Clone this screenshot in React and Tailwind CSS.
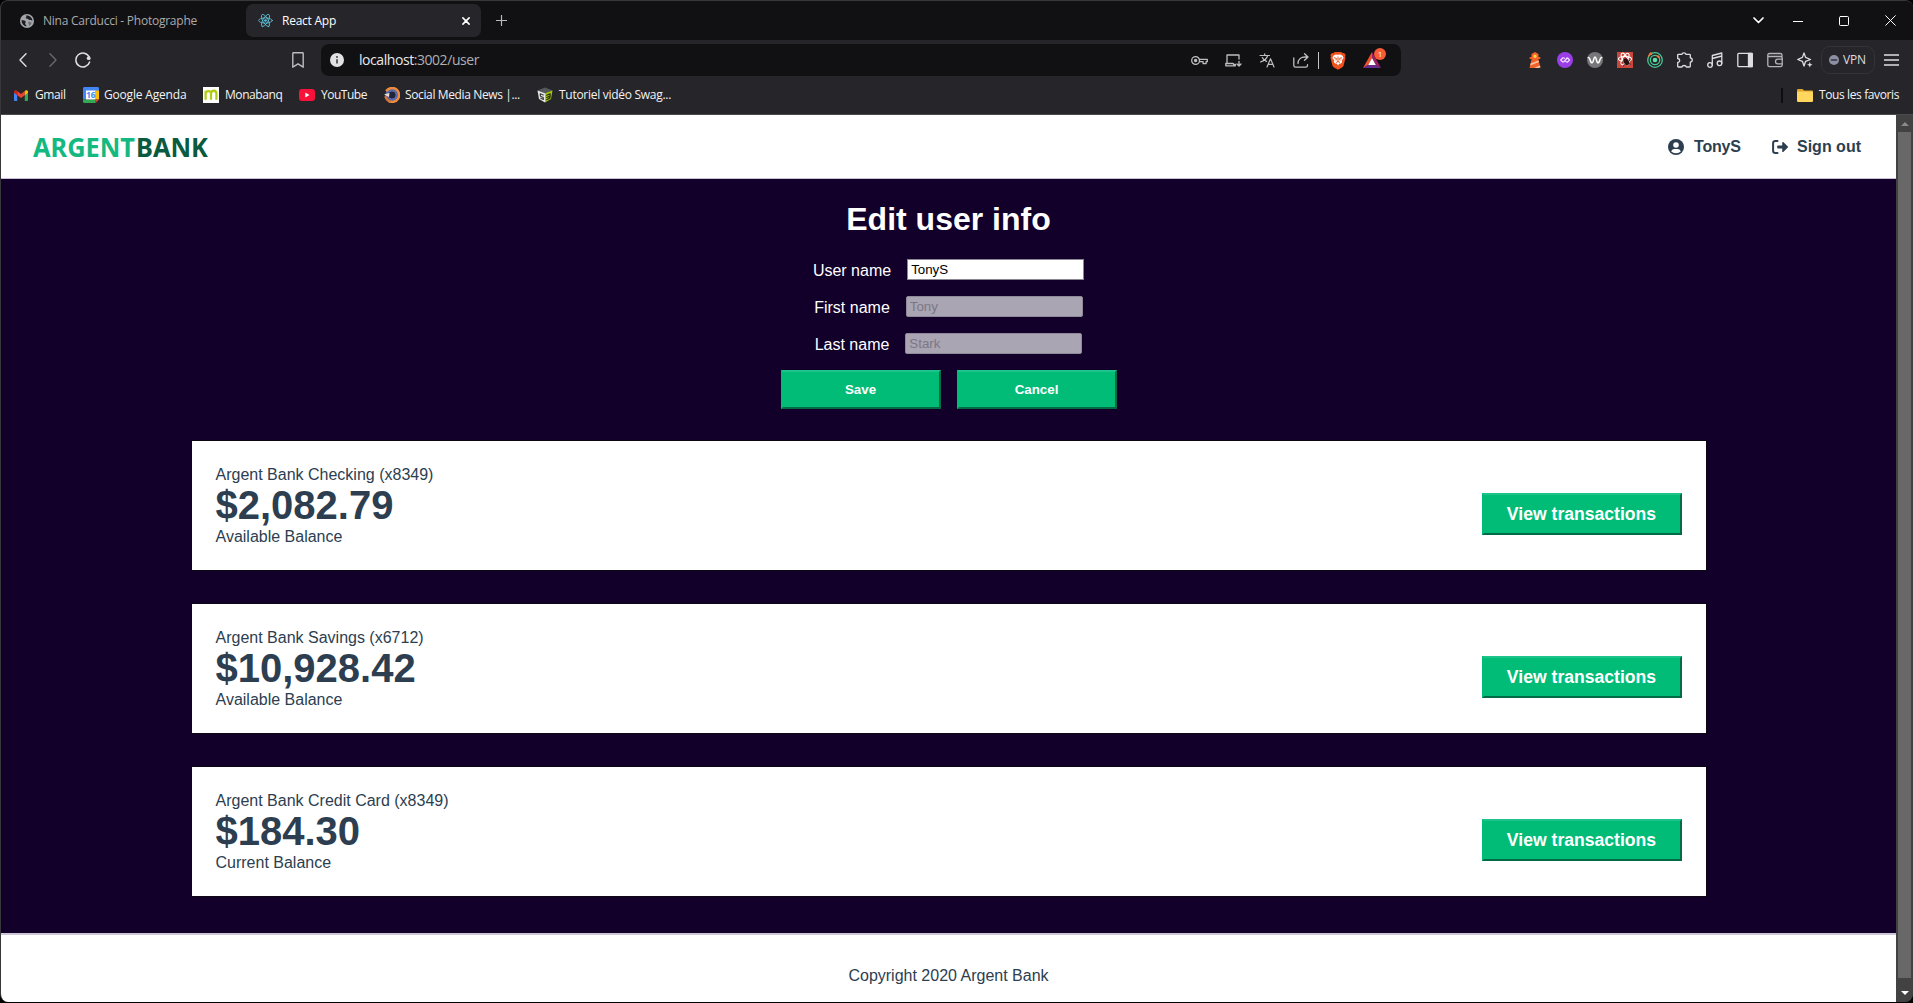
import React from "react";

const UI = "font-['Open_Sans','Noto_Sans',sans-serif]";

function Svg({ size = 16, w, h, box = "0 0 16 16", className = "", children }) {
  return (
    <svg
      width={w || size}
      height={h || size}
      viewBox={box}
      fill="none"
      stroke="currentColor"
      strokeWidth="1.3"
      strokeLinecap="round"
      strokeLinejoin="round"
      className={`block shrink-0 ${className}`}
    >
      {children}
    </svg>
  );
}

/* ---------- tab strip ---------- */

const GlobeIcon = () => (
  <Svg size={14} box="0 0 14 14">
    <circle cx="7" cy="7" r="7" fill="#a3a6aa" stroke="none" />
    <path d="M1.6 6.2c1.8.2 3.4.1 4 1.2.5 1-.7 1.4-.4 2.6.2.8 1.2.7 1.3 2.4A5.5 5.5 0 0 1 1.6 6.2z" fill="#1d1d20" stroke="none" />
    <path d="M5.4 1.7c1.2.3 1.2 1 .6 1.7-.7.7-.2 1.3.8 1.2 1.2-.1 1.3 1 2.3 1.2 1.2.2 1.7.7 3.4.6A5.6 5.6 0 0 0 5.4 1.7z" fill="#1d1d20" stroke="none" />
    <path d="M8.3 7.9c1.2-.3 2.4.2 3.4.9-.5 1.500-1.500 2.600-2.700 3.200.3-1.500-1.200-2.800-.7-4.100z" fill="#6d7074" stroke="none" />
  </Svg>
);

const ReactIcon = () => (
  <Svg size={15} box="0 0 16 16" className="text-[#5cc3dc]">
    <g strokeWidth="0.9">
      <ellipse cx="8" cy="8" rx="7.3" ry="2.8" />
      <ellipse cx="8" cy="8" rx="7.3" ry="2.8" transform="rotate(60 8 8)" />
      <ellipse cx="8" cy="8" rx="7.3" ry="2.8" transform="rotate(120 8 8)" />
    </g>
    <circle cx="8" cy="8" r="1.4" fill="currentColor" stroke="none" />
  </Svg>
);

function TabStrip() {
  return (
    <div className="flex h-[39px] shrink-0 items-center bg-[#111113]">
      <div className="flex w-[245px] items-center pl-[19px]">
        <GlobeIcon />
        <span className="ml-[9px] text-[12px] tracking-[-0.24px] text-[#a9aaad]">Nina Carducci - Photographe</span>
      </div>
      <div className="flex h-[33px] w-[235px] items-center rounded-[7px] bg-[#262529] pl-[12px] pr-[11px]">
        <ReactIcon />
        <span className="ml-[9px] flex-1 text-[12px] tracking-[-0.24px] text-white">React App</span>
        <Svg size={8} box="0 0 9 9" className="text-white">
          <path d="M1 1l7 7M8 1L1 8" strokeWidth="1.8" />
        </Svg>
      </div>
      <Svg size={11} box="0 0 11 11" className="ml-[15px] text-[#b9babc]">
        <path d="M5.5.5v10M.5 5.5h10" strokeWidth="1.2" />
      </Svg>
      <div className="ml-auto flex items-center text-white">
        <div className="flex w-[40px] justify-center">
          <Svg w={11} h={7} box="0 0 11 7"><path d="M1 1l4.5 4.5L10 1" strokeWidth="1.7" /></Svg>
        </div>
        <div className="flex w-[40px] justify-center">
          <Svg w={10} h={10} box="0 0 10 10"><path d="M0 5.5h10" strokeWidth="1" strokeLinecap="butt" /></Svg>
        </div>
        <div className="flex w-[52px] justify-center">
          <Svg w={10} h={10} box="0 0 10 10"><rect x=".5" y=".5" width="9" height="9" rx="1" strokeWidth="1" /></Svg>
        </div>
        <div className="flex w-[40px] justify-center">
          <Svg w={11} h={11} box="0 0 11 11"><path d="M.7.7l9.6 9.6M10.3.7L.7 10.3" strokeWidth="1" /></Svg>
        </div>
        <div className="w-[3px]" />
      </div>
    </div>
  );
}

/* ---------- toolbar ---------- */

const BraveLion = () => (
  <Svg w={16} h={19} box="0 0 16 19">
    <path d="M4.6 1h6.8l1.2 1.3 1.5-.2L15.600 4l-.5 1.500.4 1.600-1.900 7.300c-.3 1-1 1.700-2 2.400L8 18.700l-3.600-1.900c-1-.7-1.700-1.400-2-2.400L.5 7.100l.4-1.600L.4 4l1.500-1.900 1.500.2z" fill="#f0521e" stroke="none" />
    <path d="M8 3.700l2.400-.3 2.200 1.300 1 2.200-1.900 2.600.5 1.500-1.600 1.800-1.200-.2L8 14.500l-1.400-1.900-1.200.2L3.800 11l.5-1.500L2.400 6.900l1-2.200 2.200-1.300z" fill="#fff" stroke="none" />
    <path d="M4.300 6.800l2.200.7-.5 1.600M11.700 6.800l-2.200.7.5 1.600M8 6v4.500M6.500 11.300L8 10.500l1.500.8" stroke="#f0521e" strokeWidth="1" />
  </Svg>
);

function BatIcon() {
  return (
    <div className="relative">
      <Svg w={18} h={16} box="0 0 18 16">
        <path d="M9 0L0 16l5.400-3.200L9 6z" fill="#f0502c" stroke="none" />
        <path d="M0 16h18l-5.400-3.200H5.400z" fill="#662d91" stroke="none" />
        <path d="M9 0v6l3.600 6.800L18 16z" fill="#9e1f63" stroke="none" />
        <path d="M9 6l-3.800 6.900h7.600z" fill="#fff" stroke="none" />
      </Svg>
      <span className="absolute -top-[4px] left-[11px] flex h-3 w-3 items-center justify-center rounded-full bg-[#fa5a36] text-[8px] leading-none text-white">1</span>
    </div>
  );
}

function AddressBar() {
  const cell = "flex w-[34px] justify-center";
  return (
    <div className="flex h-[32px] w-[1080px] items-center rounded-[8px] bg-[#111113] pl-[9px] text-[#bdbec2]">
      <Svg size={14} box="0 0 14 14">
        <circle cx="7" cy="7" r="7" fill="#e2e2e5" stroke="none" />
        <path d="M7 6.300v4.200" stroke="#333337" strokeWidth="1.5" strokeLinecap="butt" />
        <circle cx="7" cy="4" r=".9" fill="#333337" stroke="none" />
      </Svg>
      <span className="ml-[15px] flex-1 pb-px text-[14px] tracking-[-0.44px] text-[#aeb0b4]">
        <span className="text-[#e8e8ea]">localhost</span>:3002/user
      </span>
      <div className={cell}>
        <Svg w={17} h={11} box="0 0 17 11">
          <circle cx="4.600" cy="5.500" r="3.900" />
          <circle cx="4.600" cy="5.500" r="1.100" fill="currentColor" />
          <path d="M8.400 4.300h7.900v2.400h-1.200v2h-3v-2H8.500" />
        </Svg>
      </div>
      <div className={cell}>
        <Svg w={17} h={13} box="0 0 17 13">
          <path d="M14 5V1H2v8.500M10.500 11.800H.8V9.500h7.200l.8 1h1.700M14 7.300v4.400M12 10l2 2 2-2" />
        </Svg>
      </div>
      <div className={cell}>
        <Svg w={16} h={15} box="0 0 16 15">
          <path d="M1 2.500h9.500M5.700.8v1.700M8.700 2.500C7.800 5.500 4.800 8 1.500 9M3.300 4.500c.8 1.800 2.300 3 4.200 3.900M8 14l3.500-8.300L15 14M9.200 11.300h4.600" strokeWidth="1.2" />
        </Svg>
      </div>
      <div className={cell}>
        <Svg w={16} h={15} box="0 0 16 15">
          <path d="M.8 5v7.500c0 1 .7 1.700 1.700 1.700h10.300c1 0 1.700-.7 1.700-1.700v-.8M11.500.8L15 4l-3.500 3.200M14.800 4H12C8 4 5 6.500 5 10.500" />
        </Svg>
      </div>
      <div className="h-[17px] w-px bg-[#c4c4c8]" />
      <div className="flex w-[37px] justify-center"><BraveLion /></div>
      <div className="flex w-[32px] justify-center"><BatIcon /></div>
      <div className="w-[13px]" />
    </div>
  );
}

const extensions = [
  <Svg key="lighthouse" box="0 0 16 16">
    <g stroke="none">
      <path d="M8 0l3.500 2v3h1.800v2H2.700V5h1.800V2z" fill="#f4622b" />
      <path d="M4.600 7h6.800L13.500 16h-11z" fill="#f4622b" />
      <path d="M3.600 11.500L11.600 8.400l.3 1.500-8.600 3.500zM7 16l6-2.600.4 1.600-2 1z" fill="#fcc6a8" />
      <rect x="6.400" y="2.800" width="3.200" height="3.200" rx="1.400" fill="#ffd93b" />
    </g>
  </Svg>,
  <Svg key="purple">
    <circle cx="8" cy="8" r="8" fill="#9a3fe8" stroke="none" />
    <path d="M7.600 6.300L6 5.800 3.700 8l2 2h.8l3.800-4M9.500 6h1.200l1.800 2-2 2.100-1.800-.6" stroke="#f3dcff" strokeWidth="1.200" />
  </Svg>,
  <Svg key="wave">
    <circle cx="8" cy="8" r="8" fill="#77777a" stroke="none" />
    <path d="M1.300 5.500c1 0 1.300.6 1.700 2 .5 2 1 3.300 2 3.300C6.800 10.800 6.500 5 8 5s1.300 5.800 3 5.800c1 0 1.500-1.300 2-3.300.4-1.400.7-2 1.700-2" stroke="#fff" strokeWidth="1.500" />
  </Svg>,
  <Svg key="react-dev">
    <rect width="16" height="16" fill="#c9473c" stroke="none" />
    <g stroke="#fff" strokeWidth="1.100">
      <ellipse cx="8" cy="7" rx="6.500" ry="2.500" />
      <ellipse cx="8" cy="7" rx="6.500" ry="2.500" transform="rotate(60 8 7)" />
      <ellipse cx="8" cy="7" rx="6.500" ry="2.500" transform="rotate(120 8 7)" />
    </g>
    <ellipse cx="9.300" cy="9.800" rx="2.600" ry="3.600" transform="rotate(-30 9.300 9.800)" fill="#2b1010" stroke="none" />
    <path d="M6 9.500l-1 .8M7.200 12.500L6.500 14M12.300 8.500l1-.5M12.500 11.500l1 .8" stroke="#2b1010" strokeWidth=".8" />
  </Svg>,
  <Svg key="radar" className="text-[#48c796]">
    <circle cx="8" cy="8" r="7.300" />
    <circle cx="8" cy="8" r="4.700" />
    <circle cx="8" cy="8" r="2.300" fill="#5ae2a9" stroke="none" />
    <path d="M3 2.300A7 7 0 0 0 1.500 4M10 3.800a5 5 0 0 1 2 1.500" stroke="#e8703a" />
    <circle cx="3.800" cy="1.800" r="1.500" fill="#f0763a" stroke="none" />
    <circle cx="11.500" cy="4.700" r="1.200" fill="#f0763a" stroke="none" />
  </Svg>,
  <Svg key="puzzle">
    <path d="M1.500 2.300h3.300c.3-2 3.900-2 4.200 0h3.500c.5 0 .8.300.8.800v2.700c2.600.2 2.600 4.200 0 4.400v4c0 .5-.3.800-.8.800H9.300c-.3-2-4-2-4.300 0H1.500c-.5 0-.8-.3-.8-.8v-3.700c2.700-.3 2.700-3.700 0-4V3.100c0-.5.300-.8.800-.8z" />
  </Svg>,
  <Svg key="music">
    <circle cx="3" cy="13" r="2.300" />
    <circle cx="12.500" cy="11.300" r="2.300" />
    <path d="M5.300 13V3.500L14.800 1v10.300M5.300 6.500L14.800 4" />
  </Svg>,
  <Svg key="sidebar">
    <rect x=".8" y="1.300" width="14.400" height="13.400" rx="1" />
    <path d="M11.500 1.300h3.700v13.400h-3.700z" fill="currentColor" />
  </Svg>,
  <Svg key="wallet" className="text-[#b4b4b8]">
    <path d="M15 4.500V3c0-1-.6-1.500-1.500-1.500H2.300C1.400 1.500.8 2 .8 3v10c0 1 .6 1.700 1.700 1.700h11c1 0 1.700-.7 1.700-1.700V6c0-.9-.6-1.500-1.500-1.500H1" />
    <path d="M15.200 7.200h-4.400a2.300 2.300 0 0 0 0 4.600h4.400" />
  </Svg>,
  <Svg key="sparkle">
    <path d="M7 1l1.600 4.400L13.500 7.500 8.600 9.300 7 14 5.400 9.300.7 7.500l4.700-2.100z" />
    <path d="M12.800 10l.8 2 2 .8-2 .8-.8 2-.8-2-2-.8 2-.8z" fill="currentColor" stroke="none" />
  </Svg>,
];

function Toolbar() {
  return (
    <div className="flex h-[40px] shrink-0 items-center text-[#dedee1]">
      <div className="flex w-[94px] items-center pl-[18px]">
        <Svg w={8} h={14} box="0 0 8 14"><path d="M7 .8L1 7l6 6.200" strokeWidth="1.400" /></Svg>
        <Svg w={8} h={14} box="0 0 8 14" className="ml-[22px] text-[#68686c]"><path d="M1 .8L7 7l-6 6.200" strokeWidth="1.400" /></Svg>
        <Svg size={16} className="ml-[18px]">
          <path d="M14.200 5A7 7 0 1 0 14.600 10" strokeWidth="1.500" />
          <circle cx="13.700" cy="6.200" r="1.900" fill="currentColor" stroke="none" />
        </Svg>
      </div>
      <div className="flex flex-1 justify-end pr-[17px]">
        <Svg w={12} h={16} box="0 0 12 16" className="text-[#bcbcc0]">
          <path d="M.8 1.500c0-.4.300-.7.700-.7h9c.4 0 .7.300.7.700v13.700L6 11.800.8 15.200z" strokeWidth="1.400" />
        </Svg>
      </div>
      <AddressBar />
      <div className="ml-[119px] flex items-center">
        {extensions.map((icon, i) => (
          <div key={i} className="flex w-[30px] justify-center">{icon}</div>
        ))}
      </div>
      <div className="ml-px flex h-[28px] w-[54px] items-center rounded-[9px] border border-[#333338] pl-[7px]">
        <Svg size={10} box="0 0 10 10">
          <circle cx="5" cy="5" r="5" fill="#8c8ea3" stroke="none" />
          <path d="M2.500 5h5" stroke="#33343d" strokeWidth="1.600" />
        </Svg>
        <span className="ml-1 text-[12px] tracking-[-0.14px]">VPN</span>
      </div>
      <Svg w={15} h={12} box="0 0 15 12" className="ml-[9px] mr-[14px]">
        <path d="M0 1h15M0 6h15M0 11h15" strokeWidth="1.300" strokeLinecap="butt" />
      </Svg>
    </div>
  );
}

/* ---------- bookmarks ---------- */

const bookmarks = [
  {
    label: "Gmail", width: "w-[69px]", gap: "ml-[7px]", track: "tracking-[-0.41px]",
    icon: (
      <Svg w={14} h={11} box="0 0 14 11">
        <g stroke="none">
          <path d="M0 1.800V10c0 .5.400 1 1 1h2.200V4.300z" fill="#4285f4" />
          <path d="M14 1.800V10c0 .5-.4 1-1 1h-2.200V4.300z" fill="#34a853" />
          <path d="M3.200 1v4.200L7 8l3.800-2.800V1L7 3.900z" fill="#ea4335" />
          <path d="M0 1.600v1.200l3.200 2.400V1L2.500.5C1.400-.3 0 .4 0 1.600z" fill="#c5221f" />
          <path d="M14 1.600v1.200l-3.200 2.400V1l.7-.5C12.600-.3 14 .4 14 1.600z" fill="#fbbc04" />
        </g>
      </Svg>
    ),
  },
  {
    label: "Google Agenda", width: "w-[120px]", gap: "ml-[5px]", track: "tracking-[-0.18px]",
    icon: (
      <Svg>
        <g stroke="none">
          <path d="M0 1.500C0 .6.600 0 1.500 0h13C15.400 0 16 .6 16 1.500V4H0z" fill="#4285f4" />
          <path d="M0 4h3.500v8.500H0z" fill="#4285f4" />
          <path d="M12.500 3.500H16v9h-3.500z" fill="#fbbc04" />
          <path d="M0 12.500h12.500V16h-11C.6 16 0 15.400 0 14.500z" fill="#34a853" />
          <path d="M12.500 12.500H16L12.500 16z" fill="#ea4335" />
          <path d="M3 3.500h9.500v9H3z" fill="#fff" />
        </g>
        <text x="7.800" y="11" textAnchor="middle" fontSize="8" fontWeight="700" fill="#4285f4" stroke="none">16</text>
      </Svg>
    ),
  },
  {
    label: "Monabanq", width: "w-[96px]", gap: "ml-[6px]", track: "tracking-[-0.43px]",
    icon: (
      <Svg>
        <rect width="16" height="16" fill="#fff" stroke="none" />
        <path d="M2.600 12.800V3.800M2.600 6.500C2.800 3.800 8 2.800 8 6.500v6.300M8 6.500c.2-3.700 5.400-3.700 5.400 0v6.300" stroke="#b4cc16" strokeWidth="2.300" strokeLinecap="butt" />
      </Svg>
    ),
  },
  {
    label: "YouTube", width: "w-[85px]", gap: "ml-[6px]", track: "tracking-[-0.48px]",
    icon: (
      <Svg w={16} h={12} box="0 0 16 12">
        <rect width="16" height="12" rx="3" fill="#f8123a" stroke="none" />
        <path d="M6.300 3.500v5L10.500 6z" fill="#fff" stroke="none" />
      </Svg>
    ),
  },
  {
    label: "Social Media News |...", width: "w-[153px]", gap: "ml-[5px]", track: "tracking-[-0.37px]",
    icon: (
      <Svg>
        <circle cx="8" cy="8" r="5" stroke="#5968a8" strokeWidth="3.500" />
        <circle cx="8" cy="8" r="3.300" fill="#20253c" stroke="none" />
        <path d="M2.800 3.400A7 7 0 1 1 5 14.200" stroke="#ee8c3e" strokeWidth="2.400" />
        <path d="M0 7.500l5.500-1.500-.5 4z" fill="#e9ddd4" stroke="none" />
        <path d="M1.500 10a7 7 0 0 0 4.500 4.600" stroke="#dc7430" strokeWidth="2.200" />
      </Svg>
    ),
  },
  {
    label: "Tutoriel vidéo Swag...", width: "w-[160px]", gap: "ml-[6px]", track: "tracking-[-0.28px]",
    icon: (
      <Svg>
        <g stroke="none">
          <path d="M8 .5l7.500 3L8 6.300.5 3.500z" fill="#55585c" />
          <path d="M.5 3.500L8 6.300V15.500L2 12z" fill="#e8e9e6" />
          <path d="M15.500 3.500L8 6.300V15.500L14 12z" fill="#a6c814" />
        </g>
        <path d="M6.300 8L3.200 6.800l.3 2.400 2.800 1.300v2L3.800 11.200" stroke="#3b3d40" strokeWidth="1.200" />
        <path d="M9.700 8.300l3.500-1.400-.2 4-3.300 1.800M9.700 10.500l3.200-1.400" stroke="#2c3312" strokeWidth="1.200" />
      </Svg>
    ),
  },
];

function BookmarksBar() {
  return (
    <div className="flex h-[34px] shrink-0 items-center pl-[13px] pb-[4px] pt-0 text-[12px] text-[#f3f3f4]">
      {bookmarks.map((b) => (
        <div key={b.label} className={`flex shrink-0 items-center whitespace-nowrap ${b.width}`}>
          {b.icon}
          <span className={`${b.gap} ${b.track}`}>{b.label}</span>
        </div>
      ))}
      <div className="ml-auto h-[15px] w-[2px] bg-[#0e0e10]" />
      <Svg w={16} h={13} box="0 0 16 13" className="ml-[14px]">
        <g stroke="none">
          <path d="M0 1.200C0 .5.500 0 1.200 0h4.300l1.600 1.500h7.700c.7 0 1.200.5 1.200 1.200V5H0z" fill="#e2a52b" />
          <rect y="2.500" width="16" height="10.500" rx="1.200" fill="#ffd75e" />
        </g>
      </Svg>
      <span className="ml-[6px] mr-[14px] tracking-[-0.39px]">Tous les favoris</span>
    </div>
  );
}

/* ---------- bank page ---------- */

function Nav() {
  return (
    <nav className="flex h-[64px] shrink-0 items-center justify-between border-b border-[#c9c2d6] bg-white pl-[32px] pr-[35px]">
      <svg width="184" height="44" viewBox="0 0 184 44" className="font-['Noto_Sans','Open_Sans',sans-serif] font-bold" fontSize="27">
        <text x="0" y="32" fill="#14b981" textLength="102" lengthAdjust="spacingAndGlyphs">ARGENT</text>
        <text x="103" y="32" fill="#0a5a40" textLength="72" lengthAdjust="spacingAndGlyphs">BANK</text>
      </svg>
      <div className="flex items-center text-[16px] font-bold text-[#2c3e50]">
        <svg width="16" height="16" viewBox="0 0 16 16">
          <circle cx="8" cy="8" r="8" fill="#2c3e50" />
          <circle cx="8" cy="6" r="2.800" fill="#fff" />
          <path d="M3.200 12.500C3.800 10.800 5 10 6.500 10h3c1.500 0 2.700.8 3.300 2.500A6.400 6.400 0 0 1 8 14.300a6.400 6.400 0 0 1-4.800-1.800z" fill="#fff" />
        </svg>
        <span className="ml-[10px] w-[47px] tracking-[-0.2px]">TonyS</span>
        <svg width="17" height="14" viewBox="0 0 17 14" className="ml-[31px]">
          <path d="M5.500 1H3.500C2 1 1.100 1.900 1.100 3.300v7.400C1.100 12.100 2 13 3.500 13h2" fill="none" stroke="#2c3e50" strokeWidth="2" strokeLinecap="round" />
          <path d="M6 5.400h4.200V2.600c0-.6.700-.9 1.100-.5l4.500 4.300c.3.300.3.900 0 1.200l-4.500 4.300c-.4.400-1.100.1-1.100-.5V8.600H6c-.5 0-.8-.3-.8-.8V6.200c0-.5.3-.8.8-.8z" fill="#2c3e50" />
        </svg>
        <span className="ml-[8px] w-[64px]">Sign out</span>
      </div>
    </nav>
  );
}

function Field({ label, value, disabled }) {
  return (
    <div className="flex h-[21px] items-center justify-center gap-4">
      <label className="pt-[3px] text-[16px] leading-[18px] text-white">{label}</label>
      <input
        readOnly
        disabled={disabled}
        value={value}
        className={
          disabled
            ? "h-[21px] w-[177px] rounded-[2px] border border-[#8f8a98] bg-[#aaa5b3] px-[3px] pb-px text-[13.333px] leading-[15px] text-[#7b7786]"
            : "h-[21px] w-[177px] border border-[#8b8792] bg-white px-[3px] pb-px text-[13.333px] leading-[15px] text-black"
        }
      />
    </div>
  );
}

const outset = "border-2 border-t-[#1cc48b] border-l-[#00bc77] border-r-[#046a46] border-b-[#046a46] bg-[#00bc77] font-bold text-white";

function Account({ title, amount, note }) {
  return (
    <section className="flex h-[131px] w-[1516px] items-start justify-between border border-[#0b0612] bg-white px-[24px] text-[#2c3e50]">
      <div className="pt-[25px]">
        <h3 className="text-[16px] leading-[18px]">{title}</h3>
        <p className="text-[40px] font-bold leading-[42px]">{amount}</p>
        <p className="mt-[2px] text-[16px] leading-[18px]">{note}</p>
      </div>
      <button className={`mt-[52px] h-[42px] w-[200px] text-[17.6px] ${outset}`}>View transactions</button>
    </section>
  );
}

const accounts = [
  { title: "Argent Bank Checking (x8349)", amount: "$2,082.79", note: "Available Balance" },
  { title: "Argent Bank Savings (x6712)", amount: "$10,928.42", note: "Available Balance" },
  { title: "Argent Bank Credit Card (x8349)", amount: "$184.30", note: "Current Balance" },
];

function Page() {
  return (
    <div className="flex min-w-0 flex-1 flex-col font-['Liberation_Sans',Arial,sans-serif]">
      <Nav />
      <main className="flex h-[754px] shrink-0 flex-col items-center bg-[#12002b]">
        <h1 className="mt-[22px] text-[32px] font-bold leading-[36px] text-white">Edit user info</h1>
        <form className="mt-[22px] flex flex-col gap-4">
          <Field label="User name" value="TonyS" />
          <Field label="First name" value="Tony" disabled />
          <Field label="Last name" value="Stark" disabled />
          <div className="flex gap-4">
            <button type="button" className={`h-[39px] w-[160px] text-[13.333px] ${outset}`}>Save</button>
            <button type="button" className={`h-[39px] w-[160px] text-[13.333px] ${outset}`}>Cancel</button>
          </div>
        </form>
        <div className="mt-[31px] flex flex-col gap-[32px]">
          {accounts.map((a) => <Account key={a.title} {...a} />)}
        </div>
      </main>
      <footer className="flex flex-1 justify-center border-t-2 border-[#cdc6d8] bg-white pt-[32px] text-[16px] leading-[18px] text-[#2c3e50]">
        Copyright 2020 Argent Bank
      </footer>
    </div>
  );
}

function Scrollbar() {
  return (
    <div className="flex w-[17px] shrink-0 flex-col items-center bg-[#424242]">
      <div className="flex h-[17px] items-center">
        <svg width="8" height="4" viewBox="0 0 8 4"><path d="M0 4L4 0l4 4z" fill="#8a8a8a" /></svg>
      </div>
      <div className="h-[846px] w-[13px] bg-[#686868]" />
      <div className="flex flex-1 items-center pt-[5px]">
        <svg width="8" height="4" viewBox="0 0 8 4"><path d="M0 0l4 4 4-4z" fill="#fff" /></svg>
      </div>
    </div>
  );
}

export default function App() {
  return (
    <div className="h-[1003px] w-[1913px] overflow-hidden bg-black">
      <div className="flex h-[1002px] w-[1913px] flex-col overflow-hidden rounded-[8px] border-l border-t border-[#38383b] bg-[#262529]">
        <div className={`flex h-[113px] shrink-0 flex-col ${UI}`}>
          <TabStrip />
          <Toolbar />
          <BookmarksBar />
        </div>
        <div className="h-px shrink-0 bg-[#4b4b4d]" />
        <div className="flex min-h-0 flex-1">
          <Page />
          <Scrollbar />
        </div>
      </div>
    </div>
  );
}
